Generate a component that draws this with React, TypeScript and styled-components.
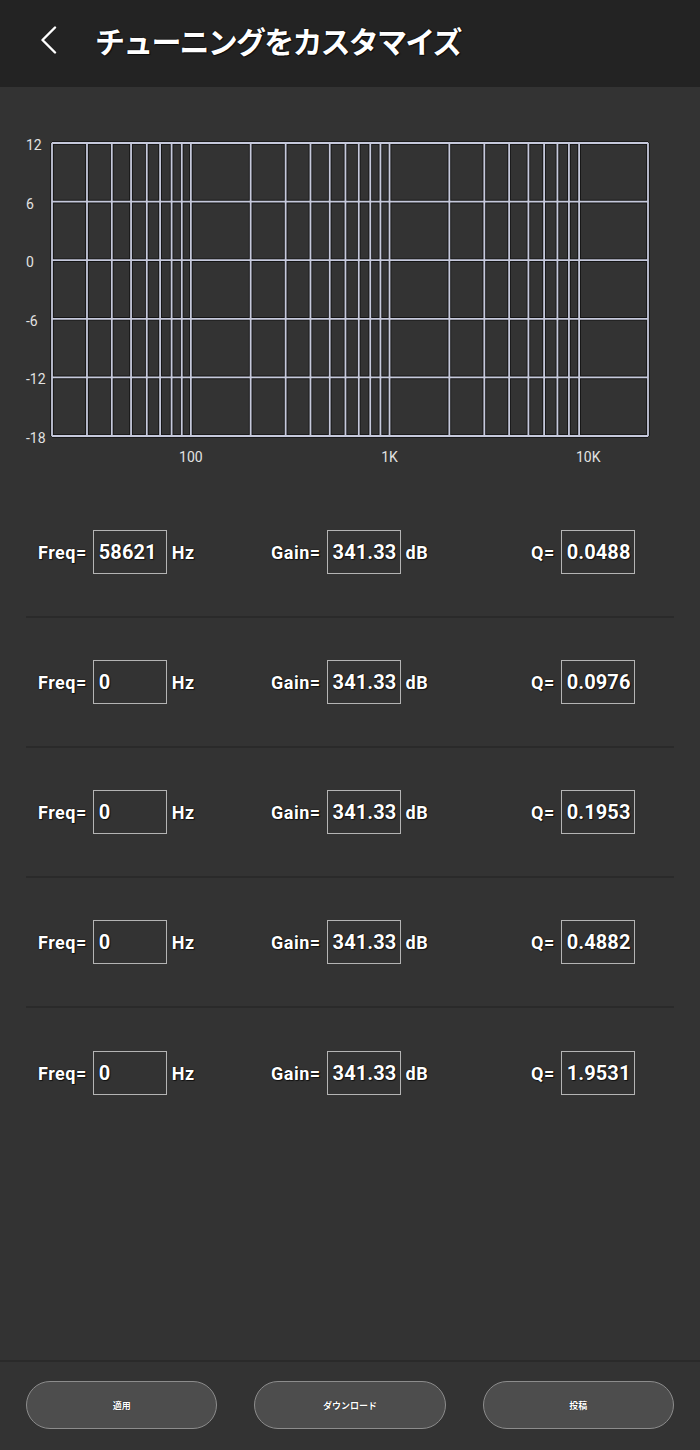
import React from "react";
import styled, { createGlobalStyle } from "styled-components";

const GlobalStyle = createGlobalStyle`
  html, body {
    margin: 0;
    padding: 0;
    background: #333333;
  }
  * {
    box-sizing: border-box;
  }
`;

const outline =
  "0 0 1px #000, 0 0 1px #000, 1px 1px 1px rgba(0,0,0,0.6)";

const Page = styled.div`
  width: 700px;
  min-height: 1450px;
  display: flex;
  flex-direction: column;
  background: #333333;
  color: #ffffff;
  font-family: Roboto, "Noto Sans", "Noto Sans CJK JP", sans-serif;
`;

const Header = styled.header`
  height: 87px;
  flex-shrink: 0;
  display: flex;
  align-items: center;
  padding: 0 0 8px 38px;
  background: #232323;
`;

const BackButton = styled.button`
  width: 22px;
  height: 30px;
  padding: 0;
  border: none;
  background: transparent;
  display: flex;
  align-items: center;
  justify-content: center;
  cursor: pointer;
`;

const Title = styled.h1`
  margin: 0 0 0 35px;
  font-family: "Noto Sans CJK JP", "Noto Sans", sans-serif;
  font-size: 30px;
  font-weight: 700;
  letter-spacing: -1.8px;
  color: #ffffff;
  text-shadow: ${outline};
`;

const Main = styled.main`
  flex: 1;
  display: flex;
  flex-direction: column;
`;

const ChartWrap = styled.div`
  margin-top: 33px;
  height: 350px;
`;

const Rows = styled.div`
  margin-top: 18px;
  padding: 0 26px;
  display: flex;
  flex-direction: column;
`;

const Row = styled.div<{ $last?: boolean }>`
  height: 130px;
  display: grid;
  grid-template-columns: 233px 260px 1fr;
  align-items: center;
  padding-left: 12px;
  border-bottom: ${(p) => (p.$last ? "none" : "2px solid #2a2a2a")};
`;

const Field = styled.div`
  display: flex;
  align-items: center;
`;

const Label = styled.span`
  font-size: 18px;
  font-weight: 700;
  letter-spacing: 0.5px;
  text-shadow: ${outline};
`;

const ValueBox = styled.div`
  width: 74px;
  height: 44px;
  margin: 0 5px 0 6px;
  padding-left: 5px;
  display: flex;
  align-items: center;
  border: 1.5px solid #b4b4b4;
  background: #333333;
  font-size: 20px;
  font-weight: 700;
  letter-spacing: 0.1px;
  text-shadow: ${outline};
`;

const Footer = styled.footer`
  height: 90px;
  flex-shrink: 0;
  border-top: 2px solid #2a2a2a;
  padding: 19px 26px 0;
  display: grid;
  grid-template-columns: repeat(3, 1fr);
  column-gap: 37px;
  align-items: start;
`;

const PillButton = styled.button`
  height: 48px;
  border-radius: 24px;
  border: 1.5px solid #8c8c8c;
  background: #4d4d4d;
  color: #ffffff;
  font-family: "Noto Sans CJK JP", "Noto Sans", sans-serif;
  font-size: 9px;
  font-weight: 700;
  text-shadow: 0 0 1px #000;
  cursor: pointer;
`;

const bands = [
  { freq: "58621", gain: "341.33", q: "0.0488" },
  { freq: "0", gain: "341.33", q: "0.0976" },
  { freq: "0", gain: "341.33", q: "0.1953" },
  { freq: "0", gain: "341.33", q: "0.4882" },
  { freq: "0", gain: "341.33", q: "1.9531" },
];

// plot area in svg coords (svg starts at page y=120)
const X0 = 52;
const X1 = 648;
const Y0 = 23;
const Y1 = 316;
const decade = (X1 - X0) / 3;
const fx = (f: number) => X0 + decade * Math.log10(f / 20);

const gridFreqs: number[] = [];
[10, 100, 1000].forEach((d) => {
  for (let m = 1; m <= 9; m++) {
    const f = d * m;
    if (f > 20 && f < 20000) gridFreqs.push(f);
  }
});

const dbLabels = ["12", "6", "0", "-6", "-12", "-18"];

function EqChart() {
  const xs = [X0, ...gridFreqs.map(fx), X1];
  const ys = dbLabels.map((_, i) => Y0 + ((Y1 - Y0) / 5) * i);
  const lines = [
    ...xs.map((x) => ({ x1: x, y1: Y0, x2: x, y2: Y1 })),
    ...ys.map((y) => ({ x1: X0, y1: y, x2: X1, y2: y })),
  ];
  return (
    <svg width="700" height="350" viewBox="0 0 700 350">
      {lines.map((l, i) => (
        <line key={"s" + i} {...l} stroke="#141414" strokeWidth={3.6} />
      ))}
      {lines.map((l, i) => (
        <line key={"l" + i} {...l} stroke="#c6c9dc" strokeWidth={1.8} />
      ))}
      {dbLabels.map((t, i) => (
        <text
          key={t}
          x={26}
          y={ys[i] + 7}
          fill="#e2e2e2"
          fontSize="14"
          fontFamily="Roboto, sans-serif"
        >
          {t}
        </text>
      ))}
      {[
        { f: 100, t: "100" },
        { f: 1000, t: "1K" },
        { f: 10000, t: "10K" },
      ].map((l) => (
        <text
          key={l.t}
          x={fx(l.f)}
          y={342}
          textAnchor="middle"
          fill="#e2e2e2"
          fontSize="14"
          fontFamily="Roboto, sans-serif"
        >
          {l.t}
        </text>
      ))}
    </svg>
  );
}

export default function App() {
  return (
    <Page>
      <GlobalStyle />
      <Header>
        <BackButton aria-label="back">
          <svg width="18" height="28" viewBox="0 0 18 28">
            <polyline
              points="15,1.5 2.5,14 15,26.5"
              fill="none"
              stroke="#ffffff"
              strokeWidth="2.4"
              strokeLinecap="round"
              strokeLinejoin="round"
            />
          </svg>
        </BackButton>
        <Title>チューニングをカスタマイズ</Title>
      </Header>
      <Main>
        <ChartWrap>
          <EqChart />
        </ChartWrap>
        <Rows>
          {bands.map((b, i) => (
            <Row key={i} $last={i === bands.length - 1}>
              <Field>
                <Label>Freq=</Label>
                <ValueBox>{b.freq}</ValueBox>
                <Label>Hz</Label>
              </Field>
              <Field>
                <Label>Gain=</Label>
                <ValueBox>{b.gain}</ValueBox>
                <Label>dB</Label>
              </Field>
              <Field>
                <Label>Q=</Label>
                <ValueBox>{b.q}</ValueBox>
              </Field>
            </Row>
          ))}
        </Rows>
      </Main>
      <Footer>
        <PillButton>適用</PillButton>
        <PillButton>ダウンロード</PillButton>
        <PillButton>投稿</PillButton>
      </Footer>
    </Page>
  );
}
